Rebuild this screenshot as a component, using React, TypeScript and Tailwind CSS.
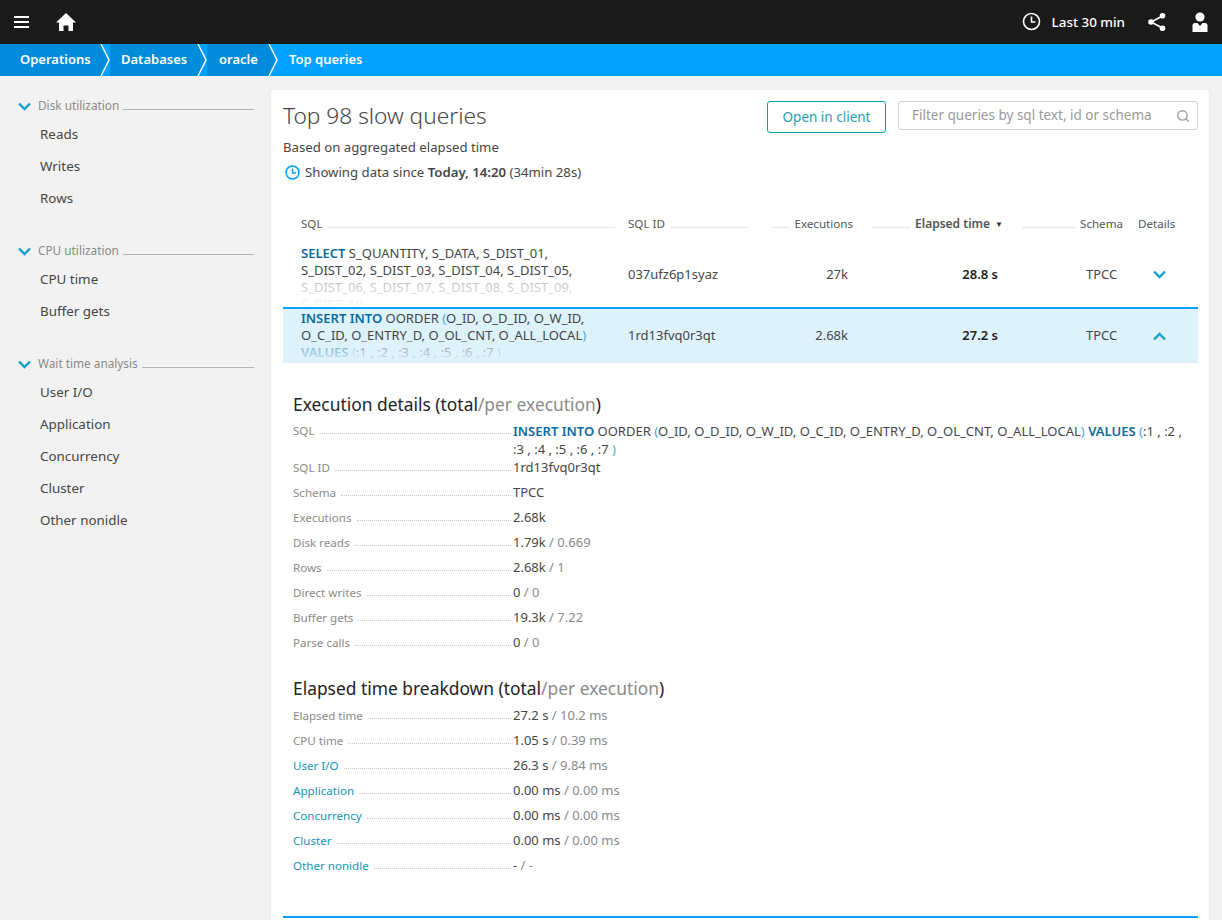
import React from 'react';
import { Search } from 'lucide-react';

const font = 'font-["Noto_Sans","Open_Sans",sans-serif]';

const nav = [
  { title: 'Disk utilization', items: ['Reads', 'Writes', 'Rows'] },
  { title: 'CPU utilization', items: ['CPU time', 'Buffer gets'] },
  { title: 'Wait time analysis', items: ['User I/O', 'Application', 'Concurrency', 'Cluster', 'Other nonidle'] },
];

const execRows: [string, string, string?][] = [
  ['SQL ID', '1rd13fvq0r3qt'],
  ['Schema', 'TPCC'],
  ['Executions', '2.68k'],
  ['Disk reads', '1.79k', '0.669'],
  ['Rows', '2.68k', '1'],
  ['Direct writes', '0', '0'],
  ['Buffer gets', '19.3k', '7.22'],
  ['Parse calls', '0', '0'],
];

const timeRows: [string, string, string, boolean][] = [
  ['Elapsed time', '27.2 s', '10.2 ms', false],
  ['CPU time', '1.05 s', '0.39 ms', false],
  ['User I/O', '26.3 s', '9.84 ms', true],
  ['Application', '0.00 ms', '0.00 ms', true],
  ['Concurrency', '0.00 ms', '0.00 ms', true],
  ['Cluster', '0.00 ms', '0.00 ms', true],
  ['Other nonidle', '-', '-', true],
];

const Crumb = ({ label, width, pad }: { label: string; width: number; pad: number }) => (
  <div className="flex h-8 items-center bg-[#008cdb] text-[13px] font-semibold text-white" style={{ width, paddingLeft: pad }}>
    {label}
  </div>
);

const CrumbArrow = () => (
  <svg width="10" height="32" viewBox="0 0 10 32" className="shrink-0">
    <rect width="10" height="32" fill="#00a1ff" />
    <path d="M0 -1 L9 16 L0 33 Z" fill="#008cdb" />
    <path d="M0.5 -1 L9 16 L0.5 33" fill="none" stroke="#fff" strokeWidth="1.4" />
  </svg>
);

const Chevron = ({ up, width = 13 }: { up?: boolean; width?: number }) => (
  <svg width={width} height="9" viewBox="0 0 13 9" className="shrink-0" fill="none" stroke="#14a0c8" strokeWidth="2.4">
    <path d={up ? 'M1 7.5 L6.5 2 L12 7.5' : 'M1 1.5 L6.5 7 L12 1.5'} />
  </svg>
);

const Row = ({ label, link, children }: { label: string; link?: boolean; children: React.ReactNode }) => (
  <div className="flex h-[25px] items-center">
    <div className="flex w-[220px] shrink-0 items-center pr-[2px]">
      <span className={`text-[11.6px] ${link ? 'text-[#1495b5]' : 'text-[#8a8a8a]'}`}>{label}</span>
      <span className="mt-[6px] ml-[5px] flex-1 border-b border-dotted border-[#c8c8c8]" />
    </div>
    <div className="text-[13px] text-[#454646]">{children}</div>
  </div>
);

const Header = ({ children, className }: { children: React.ReactNode; className?: string }) => (
  <div className={`flex items-center text-[11.6px] text-[#555] ${className ?? ''}`}>{children}</div>
);

const Rule = ({ className }: { className?: string }) => <span className={`mt-[6px] h-px flex-1 bg-[#e6e6e6] ${className ?? ''}`} />;

const cols = 'grid-cols-[345px_144px_76px_150px_140px_1fr]';

export default function App() {
  return (
    <div className={`flex h-[920px] flex-col overflow-hidden bg-[#f2f2f2] ${font}`}>
      <header className="flex h-11 shrink-0 items-center bg-[#1a1a1a] text-white">
        <svg width="16" height="14" viewBox="0 0 16 14" className="ml-[14px]" fill="#fff">
          <rect y="1" width="15" height="2" />
          <rect y="6" width="15" height="2" />
          <rect y="11" width="15" height="2" />
        </svg>
        <svg width="20" height="19" viewBox="0 0 20 19" className="ml-[26px]" fill="#fff">
          <path d="M10 0 L20 9.5 L17 9.5 L17 18 L12.5 18 L12.5 12.5 L7.5 12.5 L7.5 18 L3 18 L3 9.5 L0 9.5 Z" />
        </svg>
        <div className="ml-auto flex items-center">
          <svg width="19" height="19" viewBox="0 0 19 19" fill="none" stroke="#fff" strokeWidth="1.6">
            <circle cx="9.5" cy="9.5" r="8" />
            <path d="M9.5 4.5 V10 H13.5" />
          </svg>
          <span className="ml-[11px] text-[13.4px] font-medium">Last 30 min</span>
          <svg width="20" height="20" viewBox="0 0 20 20" className="ml-[22px]" fill="#fff" stroke="#fff">
            <path d="M15.5 4 L4 10 L15.5 16" fill="none" strokeWidth="1.6" />
            <circle cx="15.5" cy="3.8" r="2.8" stroke="none" />
            <circle cx="4" cy="10" r="2.8" stroke="none" />
            <circle cx="15.5" cy="16.2" r="2.8" stroke="none" />
          </svg>
          <svg width="16" height="20" viewBox="0 0 16 20" className="mr-[14px] ml-[25px]" fill="#fff">
            <circle cx="8" cy="5" r="4.6" />
            <path d="M0.5 20 V13.5 Q0.5 11 3 11 H5.5 L8 14 L10.5 11 H13 Q15.5 11 15.5 13.5 V20 Z" />
          </svg>
        </div>
      </header>

      <nav className="flex h-8 shrink-0 items-center bg-[#00a1ff]">
        <Crumb label="Operations" width={100} pad={20} />
        <CrumbArrow />
        <Crumb label="Databases" width={87} pad={11} />
        <CrumbArrow />
        <Crumb label="oracle" width={61} pad={12} />
        <CrumbArrow />
        <span className="pl-[11px] text-[13px] font-semibold text-white">Top queries</span>
      </nav>

      <div className="flex min-h-0 flex-1">
        <aside className="w-[270px] shrink-0 pt-[22px] pr-4 pl-[18px]">
          {nav.map((group) => (
            <div key={group.title} className="mb-[29px]">
              <div className="flex h-4 items-center">
                <Chevron />
                <span className="ml-[7px] text-[11.8px] text-[#8a8a8a]">{group.title}</span>
                <span className="mt-[6px] ml-[4px] h-px flex-1 bg-[#b4b4b4]" />
              </div>
              <ul className="mt-[4px] pl-[22px]">
                {group.items.map((item) => (
                  <li key={item} className="flex h-8 items-center text-[13.4px] text-[#454646]">
                    {item}
                  </li>
                ))}
              </ul>
            </div>
          ))}
        </aside>

        <main className="mt-[13px] mr-3 flex-1 rounded-t-[3px] border border-b-0 border-[#ececec] bg-white pt-[10px] pr-[11px] pl-3">
          <div className="flex items-start">
            <div className="flex-1">
              <h1 className="text-[22.7px] leading-8 font-light text-[#454646]">Top 98 slow queries</h1>
              <p className="mt-[6px] text-[13.2px] leading-[18px] text-[#454646]">Based on aggregated elapsed time</p>
              <p className="mt-[7px] flex items-center text-[13.2px] leading-[18px] text-[#454646]">
                <svg width="15" height="15" viewBox="0 0 15 15" className="mr-[5px] ml-[2px]" fill="none" stroke="#00a1ff" strokeWidth="1.5">
                  <circle cx="7.5" cy="7.5" r="6.5" />
                  <path d="M7.5 3.5 V8 H11" />
                </svg>
                Showing data since&nbsp;<b className="font-semibold">Today, 14:20</b>&nbsp;(34min 28s)
              </p>
            </div>
            <button className="mt-px h-8 w-[119px] rounded-[3px] border border-[#00a1b2] text-[13.5px] text-[#2a9cb8]">Open in client</button>
            <div className="mt-px ml-3 flex h-[29px] w-[300px] items-center rounded-[3px] border border-[#cfcfcf] pr-[7px] pl-[13px] text-[13.5px] text-[#9a9a9a]">
              <span className="flex-1">Filter queries by sql text, id or schema</span>
              <Search size={14} strokeWidth={2.4} className="text-[#a0a0a0]" />
            </div>
          </div>

          <div className="mt-[34px] grid h-[18px] grid-cols-[345px_144px_100px_150px_116px_1fr]">
            <Header className="pr-[13px] pl-[18px]">SQL<Rule className="ml-[5px]" /></Header>
            <Header className="pr-[24px]">SQL ID<Rule className="ml-[5px]" /></Header>
            <Header className="pr-[19px]"><Rule className="mr-[5px]" />Executions</Header>
            <Header className="pr-[19px]">
              <Rule className="mr-[5px]" />
              <b className="text-[12px] font-semibold">Elapsed time</b>
              <span className="ml-[5px] text-[8px] text-[#333]">▼</span>
            </Header>
            <Header className="pr-[15px]"><Rule className="mr-[5px]" />Schema</Header>
            <Header>Details</Header>
          </div>

          <div className={`relative grid h-[74px] ${cols} items-center overflow-hidden pt-[9px] text-[13px] text-[#454646]`}>
            <div className="h-[65px] pt-[3px] pr-6 pl-[18px] leading-[17px]">
              <b className="font-semibold text-[#0b6a9e]">SELECT</b> S_QUANTITY, S_DATA, S_DIST_01, S_DIST_02, S_DIST_03, S_DIST_04, S_DIST_05, S_DIST_06, S_DIST_07, S_DIST_08, S_DIST_09, S_DIST_10
            </div>
            <div>037ufz6p1syaz</div>
            <div className="text-right">27k</div>
            <div className="text-right font-semibold text-[#222]">28.8 s</div>
            <div className="pl-[88px]">TPCC</div>
            <div className="pl-[15px]"><Chevron /></div>
            <div className="absolute bottom-0 left-0 h-[29px] w-[340px] bg-gradient-to-b from-white/60 to-white" />
          </div>

          <div className={`relative grid h-14 ${cols} items-center overflow-hidden border-t-2 border-[#00a1ff] bg-[#def2fb] pb-[6px] text-[13px] text-[#454646]`}>
            <div className="h-[54px] self-start pt-px pr-6 pl-[18px] leading-[17px]">
              <b className="font-semibold text-[#0b6a9e]">INSERT INTO</b> OORDER <span className="text-[#4aa8e0]">(</span>O_ID, O_D_ID, O_W_ID, O_C_ID, O_ENTRY_D, O_OL_CNT, O_ALL_LOCAL<span className="text-[#4aa8e0]">)</span> <b className="font-semibold text-[#0b6a9e]">VALUES</b> <span className="text-[#4aa8e0]">(</span>:1 , :2 , :3 , :4 , :5 , :6 , :7 <span className="text-[#4aa8e0]">)</span>
            </div>
            <div>1rd13fvq0r3qt</div>
            <div className="text-right">2.68k</div>
            <div className="text-right font-semibold text-[#222]">27.2 s</div>
            <div className="pl-[88px]">TPCC</div>
            <div className="pl-[15px]"><Chevron up /></div>
            <div className="absolute bottom-0 left-0 h-[22px] w-[340px] bg-gradient-to-b from-[#def2fb]/40 to-[#def2fb]" />
          </div>

          <section className="mt-[29px] pl-[10px]">
            <h2 className="text-[17.4px] leading-6 text-[#222]">
              Execution details (total<span className="text-[#8a8a8a]">/per execution</span>)
            </h2>
            <div className="mt-[6px] flex h-[33px] items-start">
              <div className="flex h-[17px] w-[220px] shrink-0 items-center pr-[2px]">
                <span className="text-[11.6px] text-[#8a8a8a]">SQL</span>
                <span className="mt-[6px] ml-[5px] flex-1 border-b border-dotted border-[#c8c8c8]" />
              </div>
              <div className="pr-[15px] text-[13px] leading-[18px] text-[#454646]">
                <b className="font-semibold text-[#0b6a9e]">INSERT INTO</b> OORDER <span className="text-[#4aa8e0]">(</span>O_ID, O_D_ID, O_W_ID, O_C_ID, O_ENTRY_D, O_OL_CNT, O_ALL_LOCAL<span className="text-[#4aa8e0]">)</span> <b className="font-semibold text-[#0b6a9e]">VALUES</b> <span className="text-[#4aa8e0]">(</span>:1 , :2 , :3 , :4 , :5 , :6 , :7 <span className="text-[#4aa8e0]">)</span>
              </div>
            </div>
            {execRows.map(([label, total, per]) => (
              <Row key={label} label={label}>
                {total}
                {per && <span className="text-[#8a8a8a]"> / {per}</span>}
              </Row>
            ))}

            <h2 className="mt-[21px] text-[17.4px] leading-6 text-[#222]">
              Elapsed time breakdown (total<span className="text-[#8a8a8a]">/per execution</span>)
            </h2>
            <div className="mt-[3px]">
              {timeRows.map(([label, total, per, link]) => (
                <Row key={label} label={label} link={link}>
                  {total}
                  <span className="text-[#8a8a8a]"> / {per}</span>
                </Row>
              ))}
            </div>
          </section>

          <div className="mt-[38px] h-[2px] bg-[#00a1ff]" />
        </main>
      </div>
    </div>
  );
}
